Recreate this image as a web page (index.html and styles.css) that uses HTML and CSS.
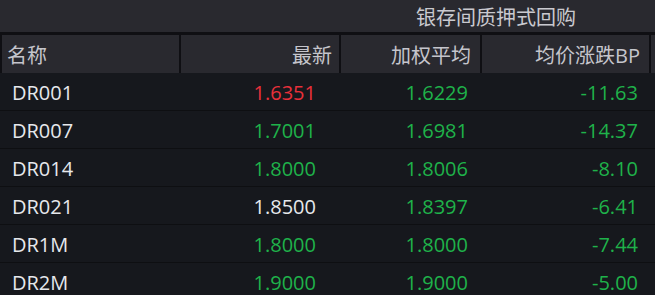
FILE: index.html
```html
<!DOCTYPE html>
<html lang="zh-CN">
<head>
<meta charset="utf-8">
<title>银存间质押式回购</title>
<link rel="stylesheet" href="styles.css">
</head>
<body>
<div class="board">
  <div class="title-row">
    <div class="title-spacer"></div>
    <div class="title">银存间质押式回购</div>
    <div class="title-rest"></div>
  </div>
  <div class="row head">
    <div class="cell c1">名称</div>
    <div class="cell c2">最新</div>
    <div class="cell c3">加权平均</div>
    <div class="cell c4">均价涨跌BP</div>
    <div class="cell c5"></div>
  </div>
  <div class="row body">
    <div class="cell c1 name">DR001</div>
    <div class="cell c2 up">1.6351</div>
    <div class="cell c3 down">1.6229</div>
    <div class="cell c4 down">-11.63</div>
    <div class="cell c5"></div>
  </div>
  <div class="row body">
    <div class="cell c1 name">DR007</div>
    <div class="cell c2 down">1.7001</div>
    <div class="cell c3 down">1.6981</div>
    <div class="cell c4 down">-14.37</div>
    <div class="cell c5"></div>
  </div>
  <div class="row body">
    <div class="cell c1 name">DR014</div>
    <div class="cell c2 down">1.8000</div>
    <div class="cell c3 down">1.8006</div>
    <div class="cell c4 down">-8.10</div>
    <div class="cell c5"></div>
  </div>
  <div class="row body">
    <div class="cell c1 name">DR021</div>
    <div class="cell c2 flat">1.8500</div>
    <div class="cell c3 down">1.8397</div>
    <div class="cell c4 down">-6.41</div>
    <div class="cell c5"></div>
  </div>
  <div class="row body">
    <div class="cell c1 name">DR1M</div>
    <div class="cell c2 down">1.8000</div>
    <div class="cell c3 down">1.8000</div>
    <div class="cell c4 down">-7.44</div>
    <div class="cell c5"></div>
  </div>
  <div class="row body">
    <div class="cell c1 name">DR2M</div>
    <div class="cell c2 down">1.9000</div>
    <div class="cell c3 down">1.9000</div>
    <div class="cell c4 down">-5.00</div>
    <div class="cell c5"></div>
  </div>
</div>
</body>
</html>
```

FILE: styles.css
```css
html, body {
  margin: 0;
  padding: 0;
  background: #16181d;
}
.board {
  width: 655px;
  height: 295px;
  overflow: hidden;
  font-family: "Open Sans", "Noto Sans CJK SC", sans-serif;
  font-size: 20px;
  background: #16181d;
}
.title-row {
  display: grid;
  grid-template-columns: 341px 310px 1fr;
  height: 32px;
  background: #29292f;
  border-bottom: 3px solid #0f0f13;
}
.title {
  display: flex;
  align-items: center;
  justify-content: center;
  color: #c9c9cf;
  font-family: "Noto Sans CJK SC", sans-serif;
  font-size: 20px;
  padding-top: 1px;
}
.row {
  display: grid;
  grid-template-columns: 181px 160px 141px 169px 1fr;
}
.cell {
  box-sizing: border-box;
  display: flex;
  align-items: center;
  justify-content: flex-end;
  white-space: nowrap;
}
.head {
  height: 38px;
  background: #29292f;
  color: #c5c5cc;
  font-family: "Noto Sans CJK SC", sans-serif;
  font-size: 20px;
}
.head .cell {
  border-right: 2px solid #0f0f13;
}
.head .c1 {
  border-left: 2px solid #0f0f13;
  justify-content: flex-start;
  padding-left: 5px;
}
.head .c2 { padding-right: 7px; }
.head .c3 { padding-right: 9px; }
.head .c4 {
  padding-right: 9px;
  font-family: "Open Sans", "Noto Sans CJK SC", sans-serif;
}
.head .c5 { border-right: none; }
.body {
  height: 38px;
  border-bottom: 1px solid #0e0f12;
  box-sizing: border-box;
  background: #16181d;
}
.body .cell {
  padding-top: 2px;
}
.body .c1 {
  justify-content: flex-start;
  padding-left: 12px;
}
.body .c2 { padding-right: 25px; }
.body .c3 { padding-right: 14px; }
.body .c4 { padding-right: 13px; }
.name { color: #e6e8ec; }
.up { color: #e8303a; }
.down { color: #1fb24a; }
.flat { color: #e6e8ec; }
```
